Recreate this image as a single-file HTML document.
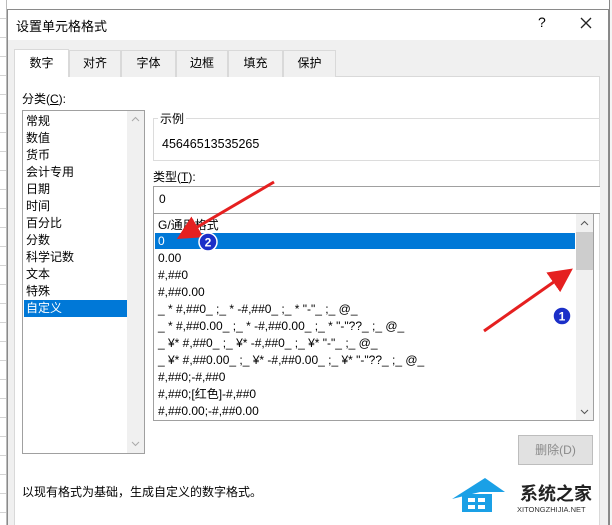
<!DOCTYPE html>
<html><head><meta charset="utf-8"><style>
*{margin:0;padding:0;box-sizing:border-box}
body{width:612px;height:525px;overflow:hidden;background:#fff;font-family:"Liberation Sans","Noto Sans CJK SC",sans-serif;font-size:12px;color:#000;position:relative}
.a{position:absolute}
.grid{position:absolute;left:0;top:0;width:7px;height:525px;background:repeating-linear-gradient(#fff 0 18px,#d4d4d4 18px 19px);border-right:1px solid #bbb}
.gridr{position:absolute;left:609px;top:0;width:3px;height:525px;background:#f4f4f4;border-left:1px solid #888}
.dlg{left:7px;top:9px;width:602px;height:516px;background:#f0f0f0;border:1px solid #8a8a8a;border-bottom:none}
.tab{top:50px;height:27px;background:#f0f0f0;border:1px solid #d9d9d9;border-bottom:none;text-align:center;line-height:25px;font-size:12px}
.item{position:absolute;left:3px;font-size:12px;line-height:17px}
.row{position:absolute;left:4px;font-size:12px;line-height:17px;white-space:nowrap}
</style></head><body>
<div class="grid"></div>
<div class="a dlg"></div>
<div class="a" style="left:8px;top:10px;width:600px;height:30px;background:#fff"></div>
<div class="a" style="left:16px;top:16px;font-size:13px">设置单元格格式</div>
<div class="a" style="left:538px;top:14px;font-size:14px">?</div>
<svg class="a" style="left:580px;top:17px" width="12" height="12"><path d="M1 1L11 11M11 1L1 11" stroke="#222" stroke-width="1.3"/></svg>
<div class="gridr"></div>
<div class="a" style="left:14px;top:76px;width:586px;height:449px;background:#fff;border:1px solid #d9d9d9;border-bottom:none"></div>
<div class="a tab" style="left:14px;top:49px;width:55px;height:28px;background:#fff;line-height:27px">数字</div>
<div class="a tab" style="left:69px;width:52px">对齐</div>
<div class="a tab" style="left:121px;width:55px">字体</div>
<div class="a tab" style="left:176px;width:52px">边框</div>
<div class="a tab" style="left:228px;width:55px">填充</div>
<div class="a tab" style="left:283px;width:53px">保护</div>
<div class="a" style="left:22px;top:90px">分类(<u>C</u>):</div>
<div class="a" style="left:22px;top:110px;width:123px;height:344px;border:1px solid #a0a0a0;background:#fff">
<div class="a" style="left:104px;top:0;width:17px;height:342px;background:#f0f0f0"></div>
<svg class="a" style="left:108px;top:5px" width="9" height="6"><path d="M1 5L4.5 1.5L8 5" stroke="#aaa" fill="none"/></svg>
<svg class="a" style="left:108px;top:330px" width="9" height="6"><path d="M1 1L4.5 4.5L8 1" stroke="#aaa" fill="none"/></svg>
<div class="item" style="top:2px">常规</div>
<div class="item" style="top:19px">数值</div>
<div class="item" style="top:36px">货币</div>
<div class="item" style="top:53px">会计专用</div>
<div class="item" style="top:70px">日期</div>
<div class="item" style="top:87px">时间</div>
<div class="item" style="top:104px">百分比</div>
<div class="item" style="top:121px">分数</div>
<div class="item" style="top:138px">科学记数</div>
<div class="item" style="top:155px">文本</div>
<div class="item" style="top:172px">特殊</div>
<div class="a" style="left:1px;top:189px;width:103px;height:17px;background:#0078d7"></div>
<div class="item" style="top:189px;color:#fff">自定义</div>
</div>
<div class="a" style="left:153px;top:118px;width:447px;height:43px;border:1px solid #dcdcdc;border-right:none"></div>
<div class="a" style="left:158px;top:110px;background:#fff;padding:0 2px">示例</div>
<div class="a" style="left:162px;top:137px;font-size:12.5px">45646513535265</div>
<div class="a" style="left:153px;top:168px">类型(<u>T</u>):</div>
<div class="a" style="left:153px;top:186px;width:447px;height:28px;border:1px solid #a0a0a0;border-right:none;background:#fff"></div>
<div class="a" style="left:159px;top:192px">0</div>
<div class="a" style="left:153px;top:213px;width:441px;height:208px;border:1px solid #a0a0a0;background:#fff">
<div class="a" style="left:422px;top:0;width:17px;height:206px;background:#f0f0f0"></div>
<div class="a" style="left:422px;top:18px;width:17px;height:38px;background:#cdcdcd"></div>
<svg class="a" style="left:426px;top:6px" width="9" height="6"><path d="M1 5L4.5 1.5L8 5" stroke="#555" fill="none"/></svg>
<svg class="a" style="left:426px;top:195px" width="9" height="6"><path d="M1 1L4.5 4.5L8 1" stroke="#555" fill="none"/></svg>
<div class="row" style="top:3px">G/通用格式</div>
<div class="a" style="left:1px;top:19px;width:420px;height:16px;background:#0078d7"></div>
<div class="row" style="top:19px;color:#fff">0</div>
<div class="row" style="top:36px">0.00</div>
<div class="row" style="top:53px">#,##0</div>
<div class="row" style="top:70px">#,##0.00</div>
<div class="row" style="top:87px">_ * #,##0_ ;_ * -#,##0_ ;_ * "-"_ ;_ @_</div>
<div class="row" style="top:104px">_ * #,##0.00_ ;_ * -#,##0.00_ ;_ * "-"??_ ;_ @_</div>
<div class="row" style="top:121px">_ ¥* #,##0_ ;_ ¥* -#,##0_ ;_ ¥* "-"_ ;_ @_</div>
<div class="row" style="top:138px">_ ¥* #,##0.00_ ;_ ¥* -#,##0.00_ ;_ ¥* "-"??_ ;_ @_</div>
<div class="row" style="top:155px">#,##0;-#,##0</div>
<div class="row" style="top:172px">#,##0;[红色]-#,##0</div>
<div class="row" style="top:189px">#,##0.00;-#,##0.00</div>
</div>
<div class="a" style="left:518px;top:435px;width:75px;height:30px;background:#e1e1e1;border:1px solid #bdbdbd;color:#8a8a8a;text-align:center;line-height:28px">删除(D)</div>
<div class="a" style="left:22px;top:483px">以现有格式为基础，生成自定义的数字格式。</div>
<svg class="a" style="left:0;top:0" width="612" height="525">
<defs><marker id="m" markerWidth="8" markerHeight="8" refX="6" refY="4" orient="auto"><path d="M0 0L8 4L0 8Z" fill="#e52020"/></marker></defs>
<line x1="484" y1="331" x2="568" y2="272" stroke="#e52020" stroke-width="3" marker-end="url(#m)"/>
<line x1="274" y1="182" x2="182" y2="236" stroke="#e52020" stroke-width="3" marker-end="url(#m)"/>
<circle cx="562" cy="316" r="9" fill="#1b2fc8" stroke="#fff" stroke-width="1.5"/>
<text x="562" y="320.5" fill="#fff" font-size="12" font-weight="bold" text-anchor="middle" font-family="Liberation Sans">1</text>
<circle cx="208" cy="242" r="9" fill="#1b2fc8" stroke="#fff" stroke-width="1.5"/>
<text x="208" y="246.5" fill="#fff" font-size="12" font-weight="bold" text-anchor="middle" font-family="Liberation Sans">2</text>
<path d="M452 499L485 478L505 492L480 492Z" fill="#1aa0e6"/>
<rect x="462" y="494" width="30" height="18" fill="#1aa0e6"/>
<rect x="468" y="498" width="7" height="4" fill="#fff"/><rect x="478" y="498" width="7" height="4" fill="#fff"/>
<rect x="468" y="505" width="7" height="4" fill="#fff"/><rect x="478" y="505" width="7" height="4" fill="#fff"/>
<text x="520" y="500" font-size="18" font-weight="bold" fill="#222" font-family="Noto Sans CJK SC,sans-serif">系统之家</text>
<text x="517" y="512" font-size="7.5" fill="#333" font-family="Liberation Sans">XITONGZHIJIA.NET</text>
</svg>
</body></html>
